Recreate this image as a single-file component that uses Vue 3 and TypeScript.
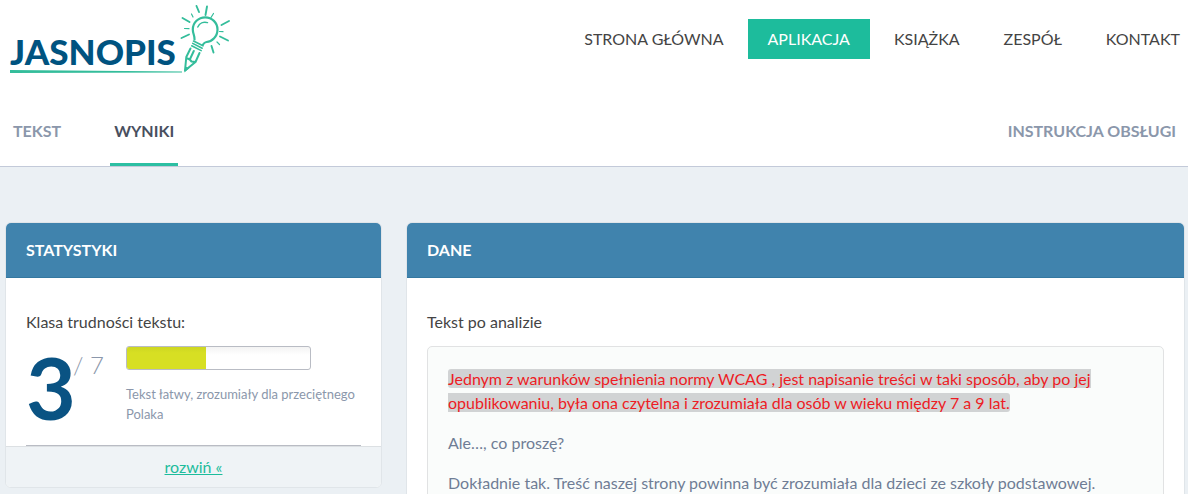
<script setup lang="ts">
interface NavItem {
  label: string
  href: string
  active?: boolean
}

const nav: NavItem[] = [
  { label: 'STRONA GŁÓWNA', href: '#strona-glowna' },
  { label: 'APLIKACJA', href: '#aplikacja', active: true },
  { label: 'KSIĄŻKA', href: '#ksiazka' },
  { label: 'ZESPÓŁ', href: '#zespol' },
  { label: 'KONTAKT', href: '#kontakt' },
]

const tabs: NavItem[] = [
  { label: 'TEKST', href: '#tekst' },
  { label: 'WYNIKI', href: '#wyniki', active: true },
]

const level = 3
const maxLevel = 7
const fill = `${Math.round((level / maxLevel) * 100)}%`
</script>

<template>
  <div class="page">
    <header class="top">
      <a class="logo" href="#strona-glowna" aria-label="Jasnopis">
        <svg width="240" height="80" viewBox="0 0 240 80">
          <text class="wordmark" x="10" y="65">JASNOPIS</text>
          <path d="M10 70 L182 71.500 L182 72.500 L10 73 Z" fill="#34bd9b" />
          <g fill="none" stroke="#34bd9b" stroke-linecap="round" stroke-linejoin="round">
            <path
              stroke-width="1.9"
              d="M196.500 6 L199 12 M207 6.500 L205.500 15 M182.500 18 L189.500 22 M229 21 L221.500 25 M181.500 38 L189 34.500 M220 36.500 L228 40.500 M211.500 46 L213.500 52.500"
            />
            <path
              stroke-width="1.2"
              d="M191.500 14 L193 17 M213.500 13.500 L211 17.500 M184.500 28.500 L189 28.700 M219.500 31.500 L223 31.700 M217 42 L219.500 44.500"
            />
            <path
              stroke-width="2.2"
              d="M194.500 39.500 C195 36 192.800 34 192.800 29.500 C192.800 22.500 198.500 17.300 205.200 17.300 C212 17.300 217.500 22.700 217.500 29.500 C217.500 36.500 212 41.700 206.500 42 C204.500 42.300 204 43 203 44.500"
            />
            <path stroke-width="1.5" d="M197.800 27 C199.500 23 203.500 21.500 207.500 22.600" />
            <path
              stroke-width="1.6"
              d="M193.500 41 L203 45.800 M192.700 43.400 L202.200 48.200 M191.700 45.800 L201.200 50.600"
            />
            <path
              stroke-width="2"
              d="M190.500 48.500 L186.300 57 L185 70.500 L195.500 62 L199.500 53 M193.800 51 L189.800 59.500 M186.300 58 L189.800 59.500 L191.500 61.500 L195.500 62"
            />
          </g>
          <path d="M185.200 66.500 L184.300 72.500 L189.500 68 Z" fill="#34bd9b" />
        </svg>
      </a>
      <nav class="main-nav" aria-label="Menu główne">
        <a
          v-for="item in nav"
          :key="item.href"
          :href="item.href"
          :class="['nav-link', { active: item.active }]"
        >{{ item.label }}</a>
      </nav>
    </header>

    <nav class="tabs" aria-label="Wyniki analizy">
      <a
        v-for="tab in tabs"
        :key="tab.href"
        :href="tab.href"
        :class="['tab', { active: tab.active }]"
      >{{ tab.label }}</a>
      <a class="tab manual" href="#instrukcja">INSTRUKCJA OBSŁUGI</a>
    </nav>

    <main class="content">
      <section class="panel">
        <h2 class="panel-title">STATYSTYKI</h2>
        <div class="panel-body stats">
          <h3 class="label">Klasa trudności tekstu:</h3>
          <div class="score">
            <div class="grade">
              <strong class="level">{{ level }}</strong>
              <span class="max">/ {{ maxLevel }}</span>
            </div>
            <div class="details">
              <div
                class="bar"
                role="progressbar"
                aria-label="Klasa trudności tekstu"
                aria-valuemin="0"
                :aria-valuenow="level"
                :aria-valuemax="maxLevel"
              >
                <div class="bar-fill" :style="{ width: fill }"></div>
              </div>
              <p class="note">Tekst łatwy, zrozumiały dla przeciętnego Polaka</p>
            </div>
          </div>
        </div>
        <footer class="panel-footer">
          <a class="expand" href="#rozwin">rozwiń «</a>
        </footer>
      </section>

      <section class="panel">
        <h2 class="panel-title">DANE</h2>
        <div class="panel-body">
          <h3 class="label">Tekst po analizie</h3>
          <article class="analysis">
            <p>
              <mark>Jednym z warunków spełnienia normy WCAG , jest napisanie treści w taki sposób, aby po jej opublikowaniu, była ona czytelna i zrozumiała dla osób w wieku między 7 a 9 lat.</mark>
            </p>
            <p>Ale…, co proszę?</p>
            <p>Dokładnie tak. Treść naszej strony powinna być zrozumiała dla dzieci ze szkoły podstawowej.</p>
          </article>
        </div>
      </section>
    </main>
  </div>
</template>

<style>
body {
  margin: 0;
  background: #ebf0f4;
}

html {
  scrollbar-width: none;
}
</style>

<style scoped>
.page {
  font: 16px/24px Lato, 'Open Sans', sans-serif;
  color: #444;
}

.top {
  display: flex;
  justify-content: space-between;
  align-items: flex-start;
  height: 96px;
  background: #fff;
}

.logo svg {
  display: block;
}

.wordmark {
  font: 900 35px Lato, 'Open Sans', sans-serif;
  fill: #005380;
}

.main-nav {
  display: flex;
  gap: 4px;
  padding-top: 19px;
}

.nav-link {
  padding: 8px 20px;
  color: #444;
  text-decoration: none;
}

.nav-link.active {
  background: #1dbc9c;
  color: #fff;
}

.nav-link:last-child {
  padding-right: 8px;
}

.tabs {
  display: flex;
  gap: 45px;
  padding: 0 8px 0 9px;
  background: #fff;
  border-bottom: 1px solid #c3cad9;
}

.tab {
  padding: 23px 4px 20px;
  border-bottom: 3px solid transparent;
  color: #8b97ab;
  font-weight: 700;
  text-decoration: none;
}

.tab.active {
  border-bottom-color: #2cbfa2;
  color: #49505f;
}

.manual {
  margin-left: auto;
}

.content {
  display: grid;
  grid-template-columns: minmax(0, 377fr) minmax(0, 779fr);
  align-items: start;
  gap: 24px;
  padding: 55px 3px 40px 5px;
}

.panel {
  border: 1px solid #e0e5e9;
  border-radius: 6px;
  background: #fff;
  overflow: hidden;
}

.panel-title {
  margin: 0;
  padding: 15px 20px;
  border-bottom: 1px solid #3478a0;
  background: #4083ad;
  color: #fff;
  font-size: 16px;
  line-height: 24px;
}

.panel-body {
  padding: 32px 20px 20px;
}

.label {
  margin: 0 0 12px;
  font-size: 16px;
  font-weight: 400;
}

.stats {
  padding-bottom: 0;
}

.score {
  display: grid;
  grid-template-columns: 100px 1fr;
  height: 99px;
  border-bottom: 1px solid #b9bcc4;
}

.grade {
  display: grid;
  grid-template-columns: 47px 1fr;
  align-items: start;
}

.level {
  color: #0a5383;
  font-size: 86px;
  line-height: 82px;
}

.max {
  color: #8b97ab;
  font-size: 24px;
  font-weight: 300;
  line-height: 38px;
}

.bar {
  box-sizing: border-box;
  width: 185px;
  height: 24px;
  border: 1px solid #b9bcc4;
  border-radius: 3px;
  background: linear-gradient(#f3f3f3, #fff 8px);
  overflow: hidden;
}

.bar-fill {
  height: 100%;
  background: linear-gradient(#cdd622, #d7df23 6px);
}

.note {
  margin: 14px 0 0;
  color: #8b97ab;
  font-size: 13px;
  line-height: 20px;
}

.panel-footer {
  padding: 8px 20px;
  border-top: 1px solid #dce0e3;
  background: #eff3f6;
  text-align: center;
}

.expand {
  color: #1dbc9c;
}

.analysis {
  padding: 20px;
  border: 1px solid #e1e2e3;
  border-radius: 5px;
  background: #fafcfb;
  color: #6f7d95;
}

.analysis p {
  margin: 0 0 16px;
}

mark {
  border-radius: 3px;
  background: #d1d3d4;
  color: #ed1c24;
}
</style>
